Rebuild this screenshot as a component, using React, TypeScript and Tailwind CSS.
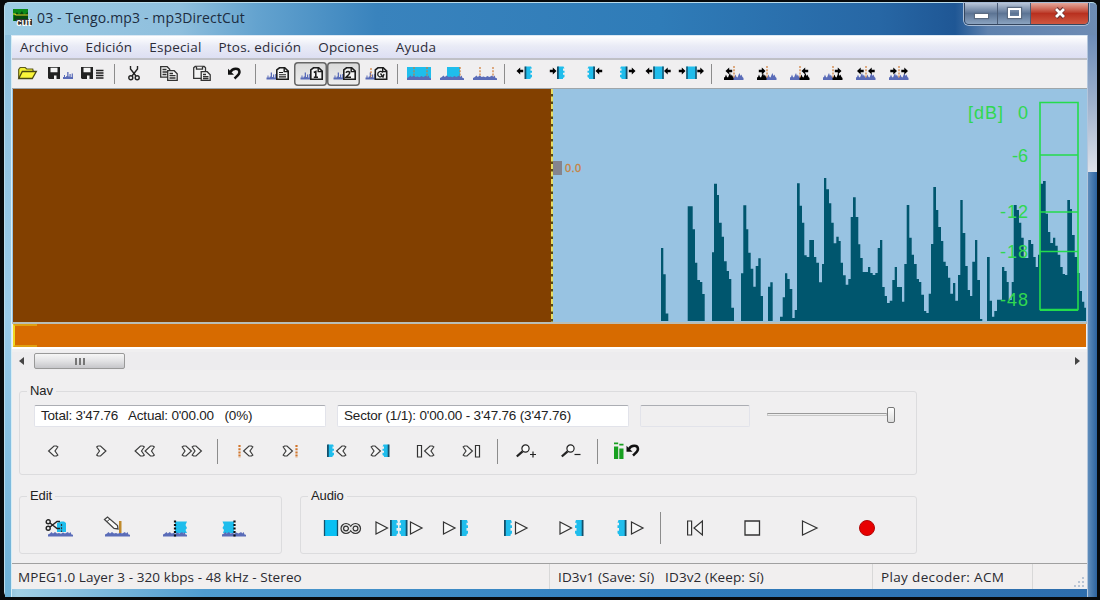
import type { ReactNode } from 'react';
import clsx from 'clsx';

const BLUE = '#5a6cb8';
const CYAN = '#1fbdec';
const ORANGE = '#cf7a35';

// [x, top] steps of the level graph, 321 is the silence line
const LEVELS: [number, number][] = [
  [661, 248], [663.3, 274.3], [665.7, 313.5], [668.3, 321],
  [687.7, 206.3], [692.7, 229.3], [695, 262.7], [697.3, 280], [700, 282], [702.3, 294], [704.7, 321],
  [712, 252.3], [714, 183.7], [717, 195], [719, 222.7], [721.7, 236.7], [724, 261.3], [726.7, 271], [729, 279], [731.3, 307.7], [734, 321],
  [741, 273.3], [743.3, 205.3], [746.3, 229.3], [748.3, 252.7], [750.7, 268.7], [753.3, 286.7], [755.7, 266], [758.3, 258.3], [760.7, 296], [763, 321],
  [768, 286.7], [770.3, 282.3], [772.7, 321],
  [780, 316.7], [782.7, 297.3], [785, 273.3], [787.3, 279], [789.7, 289], [792.3, 318], [794.7, 310], [797, 183.3], [799.7, 205.7], [802, 222.7],
  [804.3, 255.3], [806.7, 257], [809.3, 240], [814, 257], [816.3, 262.7], [819, 282.3], [822, 264], [824, 178], [826.3, 189.3], [829, 203.3],
  [831.3, 222.7], [833.7, 243.3], [836.3, 236.7], [838.7, 241], [840.7, 262.7], [843, 275.3], [845.7, 284.7], [848.3, 279], [850.7, 217],
  [853, 197.3], [855.7, 217], [858.3, 244.3], [860.3, 258], [862.7, 272], [868, 267], [870.3, 273], [872.7, 275], [875.3, 273], [877.7, 248],
  [880, 240], [882.3, 287], [884.7, 296], [887, 303], [889.7, 300.7], [892.3, 280], [894.7, 267], [897, 287], [902, 301.7], [904.3, 264],
  [906.7, 205], [909.3, 237.7], [911.7, 254.7], [914, 264], [916.7, 279], [919, 282], [921.3, 294.7], [924, 311], [926.3, 313], [928.7, 293.7],
  [931, 244], [933.3, 187], [936, 210], [938.3, 227], [941, 241], [943.3, 261.7], [945.7, 266], [948, 277.7], [950.3, 293.7], [953, 283],
  [955.3, 300.7], [958, 275], [960.3, 200], [962.7, 233], [965.3, 266], [967.7, 290], [970, 296], [972.3, 261.7], [975, 240], [977.3, 280],
  [980, 319], [982.3, 321], [987, 257], [989.7, 300.7], [992, 316.7], [994.3, 311], [997, 299.7], [1002, 267], [1004.3, 271], [1006.7, 282],
  [1008.7, 300], [1011.7, 282], [1013.7, 205], [1016.7, 210], [1019, 222.7], [1021.3, 237.7], [1023.7, 258], [1028.3, 240], [1031, 244],
  [1033.3, 257], [1035.7, 267], [1038, 254.7], [1040.3, 183.7], [1043, 181], [1045.7, 213.7], [1048, 232], [1050.3, 243], [1053, 237.7],
  [1055.3, 245.7], [1057.7, 254.7], [1060.3, 267], [1062.7, 274], [1065, 275], [1067.3, 200], [1070, 209], [1072, 235], [1074.7, 257],
  [1077.3, 273], [1079.7, 291], [1082, 301.7], [1084.3, 307.7], [1086, 321],
];

const levelPath = 'M661 321' + LEVELS.map(([x, y]) => `H${x}V${y}`).join('') + 'Z';

/* ---------- icon parts ---------- */

type At = { x: number; y?: number; fill?: string };

function Hills({ x, y = 11, fill = BLUE }: At) {
  return (
    <path
      transform={`translate(${x} ${y})`}
      fill={fill}
      d="M0 7V4.5L1 4l1-2.5L3 4l1 .5L5 2l1-2 1 3 .8-1.5L9 4l1 1v2z"
    />
  );
}

function Spikes({ x, y = 10.5 }: At) {
  return (
    <path
      transform={`translate(${x} ${y})`}
      fill={BLUE}
      d="M0 7V5h1V3h1v2h1.200V4h1V0h1.300v4.500h1V2h1.200v3h1V1.500h1.200V5H10v2z"
    />
  );
}

function LowHills({ x, y, w = 25 }: { x: number; y: number; w?: number }) {
  return (
    <path
      transform={`translate(${x} ${y}) scale(${w / 25} 1)`}
      fill={BLUE}
      d="M0 5V3L2 2l1.5-1.500L5 2l2-1.500L9 2l2-.5 2 .8L15 1l2 1 2-1 1-.5L21 2l1.500-1.500L23.500 3l1.500.3V5z"
    />
  );
}

function Arrow({ x, y = 9, dir }: { x: number; y?: number; dir: 'l' | 'r' }) {
  const d = 'M-3.500 0L.2-3.600V-1.200H3.200V1.200H.2V3.600Z';
  return <path d={d} fill="#000" transform={`translate(${x + 3} ${y}) scale(${dir === 'l' ? 1 : -1} 1)`} />;
}

// Selection block: solid edge on one side, torn edge on the other
function Block({ x, y = 4.5, w = 7.5, h = 12.5, edge }: { x: number; y?: number; w?: number; h?: number; edge: 'l' | 'r' }) {
  const s = h / 12;
  return (
    <g transform={edge === 'l' ? `translate(${x} ${y})` : `translate(${x + w} ${y}) scale(-1 1)`}>
      <path fill={CYAN} d={`M1 0H${w - 1}L${w} ${2 * s}H${w - 1.5}V${4 * s}H${w}V${6 * s}H${w - 1.5}V${8 * s}H${w}V${10 * s}L${w - 1.5} ${11 * s}V${h}H1z`} />
      <rect width="1.800" height={h} fill="#14506b" />
    </g>
  );
}

function Dots({ x, y = 5, h = 12, color = ORANGE, w = 1.2 }: { x: number; y?: number; h?: number; color?: string; w?: number }) {
  return <path d={`M${x} ${y}v${h}`} stroke={color} strokeWidth={w} strokeDasharray="2 1.200" />;
}

function Page({ x, y = 5, children }: { x: number; y?: number; children?: ReactNode }) {
  return (
    <g transform={`translate(${x} ${y})`} fill="none" stroke="#1c1c1c" strokeWidth="1.600">
      <path fill="#f4f4f4" d="M.8 4V3L3.500.8h5.200l3.500 3.400v8H.8z" />
      <path d="M8.200.8v3.800h4" strokeWidth="1.400" />
      {children}
    </g>
  );
}

function Disk({ x }: { x: number }) {
  return (
    <g transform={`translate(${x} 5)`}>
      <path fill="#222" d="M0 0h12v12H1L0 11z" />
      <path fill="#f4f4f4" d="M2.500.8h7v4.400h-7zM6 8.500h2.500V12H6z" />
    </g>
  );
}

function Scissors({ x, y, rotate = 0 }: { x: number; y: number; rotate?: number }) {
  return (
    <g transform={`translate(${x} ${y}) rotate(${rotate} 6 7)`} fill="none" stroke="#222" strokeWidth="1.400">
      <path d="M2.500 0v3l5.500 7M9.500 0v3L4 10" />
      <circle cx="2.800" cy="11.800" r="2" />
      <circle cx="9.200" cy="11.800" r="2" />
    </g>
  );
}

function Undo({ x, y }: { x: number; y: number }) {
  return (
    <g transform={`translate(${x} ${y})`}>
      <path d="M2.500 5C4.500.8 11.300.6 11.500 5c0 2.500-2.500 4-5 6.500" fill="none" stroke="#111" strokeWidth="2.500" />
      <path d="M0 1.800V7.800H6z" fill="#111" />
    </g>
  );
}

function Chevron({ x, dir }: { x: number; dir: 'l' | 'r' }) {
  return (
    <path
      transform={dir === 'l' ? `translate(${x} 7.500)` : `translate(${x + 10} 7.500) scale(-1 1)`}
      d="M9.800 1.500L8.500.5H6L.6 5.500l5.400 5h2.500l1.300-1L7 5.500z"
      fill="#f6f6f6"
      stroke="#3c3c3c"
      strokeWidth="1.200"
    />
  );
}

function Play({ x, y = 6, w = 12, h = 12 }: { x: number; y?: number; w?: number; h?: number }) {
  return <path d={`M${x + 0.5} ${y}L${x + w} ${y + h / 2}L${x + 0.5} ${y + h}z`} fill="#f8f8f8" stroke="#333" strokeWidth="1.200" />;
}

function Lens({ x }: { x: number }) {
  return (
    <g transform={`translate(${x} 6)`} fill="none" stroke="#222">
      <circle cx="9.500" cy="4.500" r="3.600" strokeWidth="1.200" fill="#fafafa" />
      <path d="M6.600 7.300L.8 12.500" strokeWidth="2.300" />
    </g>
  );
}

/* ---------- layout parts ---------- */

function Tool({ on, children }: { on?: boolean; children: ReactNode }) {
  return (
    <button
      className={clsx(
        'h-6 w-[33px] shrink-0',
        on && 'rounded-[4px] bg-gradient-to-b from-[#d9d9d9] to-[#efefef] shadow-[inset_0_0_0_1.5px_#666]',
      )}
    >
      <svg width="33" height="24" className="block">{children}</svg>
    </button>
  );
}

function NavButton({ children }: { children: ReactNode }) {
  return (
    <button className="h-[26px] w-[45px] shrink-0">
      <svg width="45" height="26" className="block">{children}</svg>
    </button>
  );
}

function BigButton({ w = 57, children }: { w?: number; children: ReactNode }) {
  return (
    <button className="h-6 shrink-0">
      <svg width={w} height="24" className="block">{children}</svg>
    </button>
  );
}

function Separator({ className }: { className: string }) {
  return (
    <div className={clsx('flex shrink-0 justify-center', className)}>
      <div className="w-px bg-[#8c8c8c]" />
    </div>
  );
}

function Group({ title, className, children }: { title: string; className?: string; children: ReactNode }) {
  return (
    <fieldset className={clsx('rounded-[3px] border border-[#dcdcde]', className)}>
      <legend className="ml-[7px] px-[3px] text-[13px] leading-4 tracking-[-0.1px]">{title}</legend>
      {children}
    </fieldset>
  );
}

function MenuBar() {
  return (
    <nav className="flex h-[22px] shrink-0 items-center gap-[17px] bg-gradient-to-b from-white via-[#e9ebf6] via-45% to-[#dddff3] pl-2 font-['Open_Sans','Noto_Sans',sans-serif] text-[13.5px] tracking-[0.2px] text-[#2c2c38]">
      <span>Archivo</span>
      <span>Edición</span>
      <span>Especial</span>
      <span>Ptos. edición</span>
      <span>Opciones</span>
      <span>Ayuda</span>
    </nav>
  );
}

function Toolbar() {
  return (
    <div className="-ml-px flex h-[28px] shrink-0 items-center">
      <Tool>
        <path d="M7.700 16.500V7.500l1.500-2h5l1.500 1.500h6l.6 2.500" fill="#f2ee30" stroke="#5d5a18" strokeWidth="1.200" />
        <path d="M7.800 16.500l3.500-7h14l-4 7z" fill="#fbf53a" stroke="#4a4812" strokeWidth="1.300" />
      </Tool>
      <Tool>
        <Disk x={4} />
        <Spikes x={19} y={10} />
      </Tool>
      <Tool>
        <Disk x={4} />
        <path d="M19 8.500h7.500M19 11h7.500M19 13.500h7.500M19 16h7.500" stroke="#222" strokeWidth="1.300" />
      </Tool>
      <Separator className="h-5 w-2" />
      <Tool><Scissors x={10} y={4} /></Tool>
      <Tool>
        <g fill="#f4f4f4" stroke="#333" strokeWidth="1.300">
          <path d="M9.700 4.700h6.500l2.500 2.500v8h-9zM11.500 7.500h4M11.500 10h5M11.500 12.500h4" />
          <path d="M16.700 8.700h6.500l3 3v6.600h-9.500zM18.500 11.500h3.500M18.500 13.700h6M18.500 16h6" />
        </g>
      </Tool>
      <Tool>
        <g fill="#f4f4f4" stroke="#333" strokeWidth="1.300">
          <path d="M9.700 5.700l1.500-1.200h9l1.300 1.200v10.600H9.700z" />
          <path d="M12.500 4.700v2.500h6V4.700" />
          <path d="M17.200 9.700h6l3 3v5.600h-9zM19 12.500h3M19 14.700h5.500M19 16.500h5.500" />
        </g>
      </Tool>
      <Tool><Undo x={11} y={5} /></Tool>
      <Separator className="h-5 w-[11px]" />
      <Tool>
        <Spikes x={5.5} />
        <Page x={15}><path d="M3 5.500h4M3 7.700h7M3 9.900h7" strokeWidth="1.100" /></Page>
      </Tool>
      <Tool on>
        <Spikes x={6.5} />
        <Page x={16}><path d="M3.800 5.500l2-1v6M3.800 10.200h4.200" /></Page>
      </Tool>
      <Tool on>
        <Spikes x={6.5} />
        <Page x={16}><path d="M3 5.800c.8-2 4-1.500 3.600.4-.3 1.500-2.200 2.500-3.500 4H8" /></Page>
      </Tool>
      <Tool>
        <Spikes x={5.5} />
        <Dots x={11} y={6} h={10} />
        <Page x={14.5}><path d="M8.200 5.500c-1.500-2-5-1-5 1.700 0 3 3.500 3.500 5 1.500M6 6.500L8.500 10l1-3" strokeWidth="1.300" /></Page>
      </Tool>
      <Separator className="h-5 w-2" />
      <Tool>
        <path d="M6 5h24v13H6z" fill={CYAN} />
        <Dots x={13} />
        <Dots x={26} />
        <LowHills x={6} y={13} w={24} />
      </Tool>
      <Tool>
        <path d="M13 5h13v12H13z" fill={CYAN} />
        <Dots x={26} />
        <LowHills x={6} y={13} w={24} />
      </Tool>
      <Tool>
        <Dots x={13} />
        <Dots x={26} />
        <LowHills x={6} y={13} w={24} />
      </Tool>
      <Separator className="h-5 w-[9px]" />
      <Tool><Arrow x={8} dir="l" /><Block x={15.5} edge="l" /></Tool>
      <Tool><Arrow x={8} dir="r" /><Block x={15} edge="l" /></Tool>
      <Tool><Block x={12.5} edge="r" /><Arrow x={21} dir="l" /></Tool>
      <Tool><Block x={12} edge="r" /><Arrow x={21} dir="r" /></Tool>
      <Tool>
        <Arrow x={5} dir="l" />
        <path d="M12.500 4.500h10V17h-10z" fill={CYAN} />
        <path d="M13 4.500V17M22 4.500V17" stroke="#14506b" strokeWidth="1.500" />
        <Arrow x={23.5} dir="l" />
      </Tool>
      <Tool>
        <Arrow x={5} dir="r" />
        <path d="M12.500 4.500h10V17h-10z" fill={CYAN} />
        <path d="M13 4.500V17M22 4.500V17" stroke="#14506b" strokeWidth="1.500" />
        <Arrow x={23.5} dir="r" />
      </Tool>
      <Separator className="h-5 w-2" />
      <Tool><Hills x={9} fill="#000" /><Hills x={18.5} /><Dots x={19} y={4} /><Arrow x={11} dir="l" /></Tool>
      <Tool><Hills x={9} fill="#000" /><Hills x={18.5} /><Dots x={19} y={4} /><Arrow x={11} dir="r" /></Tool>
      <Tool><Hills x={9} /><Hills x={18.5} fill="#000" /><Dots x={19} y={4} /><Arrow x={21} dir="l" /></Tool>
      <Tool><Hills x={9} /><Hills x={18.5} fill="#000" /><Dots x={19} y={4} /><Arrow x={21} dir="r" /></Tool>
      <Tool><Hills x={9} /><Hills x={18.5} /><Dots x={19} y={4} /><Arrow x={10.5} dir="l" /><Arrow x={21.5} dir="l" /></Tool>
      <Tool><Hills x={9} /><Hills x={18.5} /><Dots x={19} y={4} /><Arrow x={10.5} dir="r" /><Arrow x={21.5} dir="r" /></Tool>
    </div>
  );
}

function WaveView() {
  return (
    <div className="flex h-[233px] shrink-0 bg-[#98c3e2] pl-px">
      <div className="w-[538px] shrink-0 bg-[#824000]" />
      <svg width="535" height="233" viewBox="551 89 535 233" className="block shrink-0">
        <path d="M552 89V322" stroke="#5a4a10" strokeWidth="2" />
        <path d="M552 89V322" stroke="#e6dc62" strokeWidth="2" strokeDasharray="5 2.500" />
        <path d={levelPath} fill="#00566e" />
        <rect x="553" y="161" width="9" height="14" fill="#84848e" />
        <text x="565" y="172" fontSize="11" fill="#c9803c" stroke="#c9803c" strokeWidth=".3" fontFamily="Liberation Sans, sans-serif" textLength="16">0.0</text>
        <g stroke="#24dc4c" strokeWidth="1.600" fill="none">
          <path d="M1040 102.500h38V309.500h-38zM1040 155h38M1040 212h38M1040 251.500h38" />
          <path d="M1040 310h38" strokeWidth="2" />
        </g>
        <g fill="#30d850" fontSize="18" fontFamily="Liberation Sans, sans-serif" textAnchor="end">
          <text x="1003" y="119" textLength="35">[dB]</text>
          <text x="1028" y="119">0</text>
          <text x="1028" y="161.500">-6</text>
          <text x="1028" y="218" textLength="28">-12</text>
          <text x="1028" y="258" textLength="28">-18</text>
          <text x="1028" y="306" textLength="28">-48</text>
        </g>
      </svg>
    </div>
  );
}

function NavGroup() {
  const field = 'flex h-[22px] items-center whitespace-pre rounded-[2px] border border-[#e2e3ea] border-t-[#abadb3]';
  return (
    <Group title="Nav" className="ml-[7px] h-[92px] w-[898px]">
      <div className="mt-[6px] flex pl-[14px] text-[13.5px]">
        <div className={clsx(field, 'w-[292px] bg-white pl-[6px] tracking-[-0.2px]')}>{"Total: 3'47.76   Actual: 0'00.00   (0%)"}</div>
        <div className={clsx(field, 'ml-[11px] w-[292px] bg-white pl-[6px] tracking-[-0.18px]')}>{"Sector (1/1): 0'00.00 - 3'47.76 (3'47.76)"}</div>
        <div className={clsx(field, 'ml-[11px] w-[110px]')} />
        <div className="ml-[17px] flex h-5 items-center">
          <div className="mb-px h-[3px] w-[120px] border border-[#c8c8c8] border-t-[#999] bg-[#eee]" />
          <div className="h-4 w-[8px] rounded-[2px] border border-[#777] bg-gradient-to-b from-white to-[#ddd]" />
        </div>
      </div>
      <div className="mt-[11px] flex items-center pl-[11px]">
        <NavButton><Chevron x={17} dir="l" /></NavButton>
        <NavButton><Chevron x={20.5} dir="r" /></NavButton>
        <NavButton><Chevron x={13.5} dir="l" /><Chevron x={23.5} dir="l" /></NavButton>
        <NavButton><Chevron x={16} dir="r" /><Chevron x={26} dir="r" /></NavButton>
        <Separator className="h-[25px] w-3" />
        <NavButton><Dots x={16.5} y={7} h={13} color="#d2762c" w={2.2} /><Chevron x={20} dir="l" /></NavButton>
        <NavButton><Chevron x={15} dir="r" /><Dots x={28.5} y={7} h={13} color="#d2762c" w={2.2} /></NavButton>
        <NavButton><Block x={14} y={6.5} w={7} edge="l" /><Chevron x={23} dir="l" /></NavButton>
        <NavButton><Chevron x={13} dir="r" /><Block x={24.5} y={6.5} w={7} edge="r" /></NavButton>
        <NavButton>
          <path d="M14.500 7.500h4v11.500h-4z" fill="#f8f8f8" stroke="#333" strokeWidth="1.200" />
          <Chevron x={21} dir="l" />
        </NavButton>
        <NavButton>
          <Chevron x={15} dir="r" />
          <path d="M27.500 7.500h4v11.500h-4z" fill="#f8f8f8" stroke="#333" strokeWidth="1.200" />
        </NavButton>
        <Separator className="h-[25px] w-2" />
        <NavButton><Lens x={15} /><path d="M29 16.500h6M32 13.500v6" stroke="#222" strokeWidth="1.200" /></NavButton>
        <NavButton><Lens x={15} /><path d="M28.500 16.500h6" stroke="#222" strokeWidth="1.200" /></NavButton>
        <Separator className="h-[25px] w-3" />
        <NavButton>
          <path d="M11 8.500h4.200V21H11zM16.300 10.500h4.200V21h-4.200zM11 4.500h4.200v1.800H11zM16.300 5.800h4.200v1.800h-4.200z" fill="#18a020" />
          <Undo x={23.5} y={6} />
        </NavButton>
      </div>
    </Group>
  );
}

function EditGroup() {
  return (
    <Group title="Edit" className="h-[66px] w-[263px]">
      <div className="mt-[12px] flex pl-[10px]">
        <BigButton w={58}>
          <path d="M27 7l4-1.500h3l2 1.500v9h-9z" fill={CYAN} />
          <Dots x={31.5} y={8} h={8} color="#333" />
          <LowHills x={18} y={15.5} />
          <Scissors x={17} y={2} rotate={90} />
        </BigButton>
        <BigButton w={58}>
          <LowHills x={17} y={15.5} />
          <path d="M31 5h2.500v12H31z" fill="#c08a2c" />
          <path d="M16.500 3.500l3-2.500 10 8.500.5 3.500-4-.5z" fill="#fafafa" stroke="#444" strokeWidth="1.300" />
          <path d="M19 5.500l3-2.500" stroke="#444" />
        </BigButton>
        <BigButton w={58}>
          <path d="M29 5.500h12l-1.500 3.500 1.500 3-1.500 2 1.500 3H29z" fill={CYAN} />
          <LowHills x={17} y={15.5} w={24} />
          <path d="M29 4.500v17" stroke="#111" strokeWidth="2.200" strokeDasharray="2 1.500" />
        </BigButton>
        <BigButton w={58}>
          <path d="M30 5.500H18.500L20 9l-1.500 3 1.500 2-1 3h11z" fill={CYAN} />
          <LowHills x={18} y={15.5} w={24} />
          <path d="M30.500 4.500v17" stroke="#111" strokeWidth="2.200" strokeDasharray="2 1.500" />
        </BigButton>
      </div>
    </Group>
  );
}

function AudioGroup() {
  return (
    <Group title="Audio" className="ml-[18px] h-[66px] w-[617px]">
      <div className="mt-[12px] flex items-center pl-[12px]">
        <BigButton>
          <path d="M11 4h14v16H11z" fill="#08c0f4" />
          <path d="M11.500 4v16M24.500 4v16" stroke="#14506b" strokeWidth="1.300" />
          <g fill="none" stroke="#333" strokeWidth="3.800">
            <circle cx="33" cy="12.500" r="3.700" />
            <circle cx="42.500" cy="12.500" r="3.700" />
          </g>
          <g fill="none" stroke="#e4e4e4" strokeWidth="1.400">
            <circle cx="33" cy="12.500" r="3.700" />
            <circle cx="42.500" cy="12.500" r="3.700" />
            <path d="M35.500 9.500l4.500 6M35.500 15.500l4.500-6" />
          </g>
        </BigButton>
        <BigButton>
          <Play x={5.5} />
          <Block x={20} y={4} w={8} h={16} edge="l" />
          <Block x={29.5} y={4} w={8} h={16} edge="r" />
          <Play x={40} />
        </BigButton>
        <BigButton><Play x={16} /><Block x={33} y={4} w={8} h={16} edge="l" /></BigButton>
        <BigButton><Block x={20} y={4} w={8} h={16} edge="l" /><Play x={31} /></BigButton>
        <BigButton><Play x={18.5} /><Block x={34} y={4} w={8.5} h={16} edge="r" /></BigButton>
        <BigButton><Block x={19.5} y={4} w={9} h={16} edge="r" /><Play x={33} /></BigButton>
        <Separator className="-my-1 h-8 w-[10px]" />
        <BigButton>
          <path d="M22.600 5h4v14h-4zM37.400 5v14L29 12z" fill="#f8f8f8" stroke="#333" strokeWidth="1.200" />
        </BigButton>
        <BigButton><path d="M23 5h14.500v14H23z" fill="#f4f4f4" stroke="#333" strokeWidth="1.300" /></BigButton>
        <BigButton><Play x={23} y={5} w={15} h={14} /></BigButton>
        <BigButton><circle cx="31" cy="12" r="7.500" fill="#e80000" stroke="#b00808" /></BigButton>
      </div>
    </Group>
  );
}

function StatusBar() {
  return (
    <footer className="mt-[9px] flex h-[26px] shrink-0 border-t border-[#a0a0a0] bg-[#f1efef] font-['Open_Sans','Noto_Sans',sans-serif] text-[13.5px] leading-[26px] text-[#2a2a30]">
      <div className="w-[538px] whitespace-pre border-r border-[#d8d8d8] pl-[6px] tracking-[0.09px]">MPEG1.0 Layer 3 - 320 kbps - 48 kHz - Stereo</div>
      <div className="w-[323px] whitespace-pre border-r border-[#d8d8d8] pl-2 tracking-[0.12px]">{'ID3v1 (Save: Sí)   ID3v2 (Keep: Sí)'}</div>
      <div className="w-[160px] border-r border-[#d8d8d8] pl-2 tracking-[0.35px]">Play decoder: ACM</div>
      <div className="flex flex-1 items-end justify-end p-0.5">
        <svg width="11" height="11">
          <path d="M8 1h2v2H8zM8 5h2v2H8zM8 9h2v2H8zM4 5h2v2H4zM4 9h2v2H4zM0 9h2v2H0z" fill="#b8c4d4" />
        </svg>
      </div>
    </footer>
  );
}

function TitleBar() {
  return (
    <header className="flex h-[32px] shrink-0 items-start justify-between pl-[7px]">
      <div className="flex h-[29px] items-center gap-[4px]">
        <svg width="21" height="20">
          <path d="M1 1h15v12H1z" fill="#0a8a1c" />
          <path d="M2 8l3-4 2 3 3-4 2 4 4-3v9H2z" fill="#064a10" />
          <path d="M1 6h2l1 1h12" stroke="#e0d028" strokeWidth="1.200" fill="none" />
          <path d="M4 11h16v6H5z" fill="#333" />
          <text x="4" y="18" fontSize="10" fontWeight="bold" fill="#fff" fontFamily="Liberation Sans, sans-serif" textLength="15">cut</text>
        </svg>
        <h1 className="font-['Open_Sans','Noto_Sans',sans-serif] text-[14px] tracking-[0.14px] text-[#1c2c40]">03 - Tengo.mp3 - mp3DirectCut</h1>
      </div>
      <div className="mr-[8px] flex h-[22px] overflow-hidden rounded-b-[5px] border border-t-0 border-[#34465f] shadow-[0_0_0_1px_#a9bdd6]">
        <div className="flex w-[33px] items-center justify-center border-r border-[#4a5c76] bg-gradient-to-b from-[#b9c6d8] via-[#5c7494] via-50% to-[#8ba3c0]">
          <div className="mt-[4px] h-1 w-[13px] bg-white shadow-[0_0_1px_1px_#5a6a80]" />
        </div>
        <div className="flex w-[33px] items-center justify-center border-r border-[#4a5c76] bg-gradient-to-b from-[#b9c6d8] via-[#5c7494] via-50% to-[#8ba3c0]">
          <div className="mb-[2px] h-[10px] w-[13px] border-[2.5px] border-white shadow-[0_0_1px_1px_#5a6a80]" />
        </div>
        <div className="flex w-[57px] items-center justify-center bg-gradient-to-b from-[#e3a79c] via-[#b8301f] via-50% to-[#d0563f]">
          <svg width="14" height="12" className="mb-[2px]">
            <path d="M3 1.500l8 9M11 1.500l-8 9" stroke="#6b3030" strokeWidth="4.500" />
            <path d="M3 2l8 8M11 2l-8 8" stroke="#fff" strokeWidth="2.800" />
          </svg>
        </div>
      </div>
    </header>
  );
}

export default function App() {
  return (
    <div className="flex h-[600px] w-[1100px] overflow-hidden bg-[#080a0c] pb-[3px] pl-1 pr-[3px] pt-[2px] font-['Liberation_Sans',sans-serif] text-[#222]">
      <div className="flex w-[1093px] flex-col rounded-[5px] border-l border-t border-[#b9dcec] bg-[linear-gradient(90deg,#9ccbe4_0%,#8fbfdd_16%,#64a3cf_23%,#3983bd_34%,#2f7cb8_60%,#2767a5_80%,#1f5795_87%,#5f82ae_90%,#6e8cb4_100%)]">
        <TitleBar />
        <div className="flex flex-1 bg-[linear-gradient(90deg,#86bcd9_0%,#a2d0e6_12px,#4f9bcf_200px,#2f7dbd_60%,#2d6cab_100%)]">
          <div className="w-[7px] shrink-0 border-r border-[#d5edf6] bg-gradient-to-b from-[#8dbfdd] via-[#9accea] to-[#6cb0d6]" />
          <div className="flex w-[1075px] shrink-0 flex-col">
            <main className="flex h-[554px] flex-col border-t border-[#dbe8f4] bg-[#f0eff0]">
              <MenuBar />
              <div className="h-[2px] shrink-0 bg-[#bfc0c6]" />
              <Toolbar />
              <div className="h-px shrink-0 bg-[#9fa6aa]" />
              <WaveView />
              <div className="h-[2px] shrink-0 bg-[#b9beb6]" />
              <div className="mx-px flex h-[23px] shrink-0 bg-[#d76b00]">
                <div className="w-6 border-y-2 border-l-2 border-[#f0d820] border-y-[#e0a010]" />
              </div>
              <div className="h-[2px] shrink-0 bg-white" />
              <div className="mt-[3px] flex h-[18px] shrink-0 items-center justify-between bg-[#edecee] px-[6px]">
                <div className="flex items-center gap-[10px]">
                  <svg width="6" height="8"><path d="M6 0v8L1 4z" fill="#444" /></svg>
                  <div className="flex h-4 w-[91px] items-center justify-center gap-[2px] rounded-[2px] border border-[#999] bg-gradient-to-b from-[#f6f6f6] via-[#e2e2e4] to-[#c6c6ca]">
                    <div className="h-[7px] w-[2px] bg-[#777]" />
                    <div className="h-[7px] w-[2px] bg-[#777]" />
                    <div className="h-[7px] w-[2px] bg-[#777]" />
                  </div>
                </div>
                <svg width="6" height="8"><path d="M0 0v8l5-4z" fill="#444" /></svg>
              </div>
              <div className="h-[13px] shrink-0" />
              <NavGroup />
              <div className="ml-[7px] mt-[13px] flex">
                <EditGroup />
                <AudioGroup />
              </div>
              <StatusBar />
            </main>
          </div>
          <div className="flex flex-1 flex-col border-l border-[#b4c6dc]">
            <div className="h-[137px] bg-gradient-to-b from-[#6d8cb8] via-[#9fb1cc] to-[#dfe3ea]" />
            <div className="flex-1 bg-gradient-to-r from-[#5f8dbb] to-[#2c639f]" />
          </div>
        </div>
      </div>
    </div>
  );
}
